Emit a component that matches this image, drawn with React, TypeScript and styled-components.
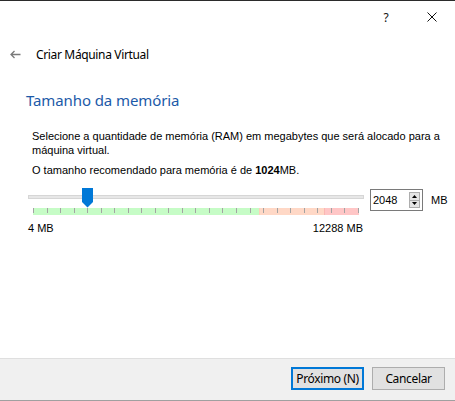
import React from "react";
import styled, { createGlobalStyle } from "styled-components";

const GlobalStyle = createGlobalStyle`
  html, body { margin: 0; padding: 0; background: #ffffff; }
  * { box-sizing: border-box; }
`;

const UI = `"Noto Sans", "Open Sans", sans-serif`;
const BODY = `"Liberation Sans", Arial, sans-serif`;

const Window = styled.div`
  width: 455px;
  height: 401px;
  border-top: 1px solid #2b2b2b;
  background: #ffffff;
  display: flex;
  flex-direction: column;
  overflow: hidden;
`;

const TitleBar = styled.div`
  height: 32px;
  display: flex;
  justify-content: flex-end;
  align-items: stretch;
`;

const CaptionButton = styled.div`
  width: 46px;
  display: flex;
  align-items: center;
  justify-content: center;
  font-family: ${UI};
  font-size: 12px;
  color: #111;
`;

const Content = styled.div`
  flex: 1;
  display: flex;
  flex-direction: column;
`;

const Header = styled.div`
  margin-top: 9px;
  height: 24px;
  display: flex;
  align-items: center;
  padding-left: 10px;
  gap: 15px;
`;

const HeaderTitle = styled.span`
  font-family: ${UI};
  font-size: 12px;
  color: #000;
  letter-spacing: -0.35px;
`;

const Heading = styled.h1`
  margin: 24px 0 0 26px;
  font-family: ${UI};
  font-weight: 400;
  font-size: 15px;
  line-height: 20px;
  color: #1c5aa8;
  letter-spacing: -0.1px;
`;

const Paragraph = styled.p<{ $gap: number }>`
  margin: ${(p) => p.$gap}px 0 0 32px;
  width: 420px;
  font-family: ${BODY};
  font-size: 11px;
  line-height: 14px;
  color: #000;
`;

const SliderRow = styled.div`
  margin: 11px 0 0 28px;
  display: flex;
  align-items: flex-start;
`;

const SliderArea = styled.div`
  position: relative;
  width: 336px;
  display: flex;
  flex-direction: column;
`;

const Track = styled.div`
  margin-top: 7px;
  height: 4px;
  background: #e7e7e7;
  border: 1px solid #d6d6d6;
`;

const Thumb = styled.svg`
  position: absolute;
  top: 0;
`;

const ScaleBar = styled.div`
  margin: 9px 5px 0 5px;
  height: 7px;
  background: linear-gradient(
    to right,
    #c6fcc6 0,
    #c6fcc6 226px,
    #fbc8b0 226px,
    #ffd8c6 227px,
    #ffd8c6 291px,
    #f5a8a0 291px,
    #ffc6c6 292px,
    #ffc6c6 100%
  );
  display: flex;
  justify-content: space-between;
`;

const Tick = styled.span`
  width: 1px;
  height: 5px;
  background: #a3a3a3;
`;

const Labels = styled.div`
  margin-top: 6px;
  display: flex;
  justify-content: space-between;
  padding-right: 1px;
  font-family: ${BODY};
  font-size: 11px;
  line-height: 14px;
  color: #000;
`;

const SpinBox = styled.div`
  margin: 1px 0 0 6px;
  width: 53px;
  height: 22px;
  border: 1px solid #7a7a7a;
  background: #fff;
  display: flex;
  align-items: center;
  justify-content: space-between;
  padding: 0 2px 0 2px;
`;

const SpinValue = styled.span`
  font-family: ${BODY};
  font-size: 11px;
  color: #000;
`;

const SpinButtons = styled.div`
  width: 11px;
  height: 16px;
  display: flex;
  flex-direction: column;
`;

const SpinButton = styled.div`
  flex: 1;
  background: #e5e5e5;
  border: 1px solid #adadad;
  display: flex;
  align-items: center;
  justify-content: center;
  & + & { border-top: none; }
`;

const Unit = styled.span`
  margin: 6px 0 0 8px;
  font-family: ${BODY};
  font-size: 11px;
  color: #000;
`;

const Footer = styled.div`
  height: 43px;
  border-top: 1px solid #dfdfdf;
  border-bottom: 1px solid #a0a0a0;
  background: #f0f0f0;
  display: flex;
  justify-content: flex-end;
  align-items: flex-start;
  padding: 8px 10px 0 0;
  gap: 8px;
`;

const Button = styled.button<{ $primary?: boolean }>`
  width: 73px;
  height: 23px;
  margin: 0;
  padding: 0;
  background: #e1e1e1;
  border: ${(p) => (p.$primary ? "2px solid #0078d7" : "1px solid #adadad")};
  font-family: ${UI};
  font-size: 12px;
  color: #000;
  letter-spacing: -0.35px;
`;

const MIN = 4;
const MAX = 12288;
const VALUE = 2048;
const SCALE_W = 326;

export default function App() {
  const center = 5 + ((VALUE - MIN) / (MAX - MIN)) * SCALE_W;
  return (
    <>
      <GlobalStyle />
      <Window>
        <TitleBar>
          <CaptionButton>?</CaptionButton>
          <CaptionButton>
            <svg width="10" height="10" viewBox="0 0 10 10">
              <path d="M0.5 0.5 L9.5 9.5 M9.5 0.5 L0.5 9.5" stroke="#111" strokeWidth="1" />
            </svg>
          </CaptionButton>
        </TitleBar>
        <Content>
          <Header>
            <svg width="11" height="9" viewBox="0 0 11 9">
              <path d="M10.5 4.5 H1 M4.5 1 L1 4.5 L4.5 8" stroke="#7a7a7a" strokeWidth="1.3" fill="none" />
            </svg>
            <HeaderTitle>Criar Máquina Virtual</HeaderTitle>
          </Header>
          <Heading>Tamanho da memória</Heading>
          <Paragraph $gap={19}>
            Selecione a quantidade de memória (RAM) em megabytes que será alocado para a máquina virtual.
          </Paragraph>
          <Paragraph $gap={6}>
            O tamanho recomendado para memória é de <b>1024</b>MB.
          </Paragraph>
          <SliderRow>
            <SliderArea>
              <Track />
              <Thumb
                width="11"
                height="20"
                viewBox="0 0 11 20"
                style={{ left: `${Math.round(center - 5)}px` }}
              >
                <path d="M0 0 H11 V14 L5.5 19.5 L0 14 Z" fill="#0078d7" />
              </Thumb>
              <ScaleBar>
                {Array.from({ length: 25 }, (_, i) => (
                  <Tick key={i} />
                ))}
              </ScaleBar>
              <Labels>
                <span>4 MB</span>
                <span>12288 MB</span>
              </Labels>
            </SliderArea>
            <SpinBox>
              <SpinValue>2048</SpinValue>
              <SpinButtons>
                <SpinButton>
                  <svg width="5" height="3" viewBox="0 0 5 3">
                    <path d="M0 3 L2.5 0 L5 3 Z" fill="#000" />
                  </svg>
                </SpinButton>
                <SpinButton>
                  <svg width="5" height="3" viewBox="0 0 5 3">
                    <path d="M0 0 L2.5 3 L5 0 Z" fill="#000" />
                  </svg>
                </SpinButton>
              </SpinButtons>
            </SpinBox>
            <Unit>MB</Unit>
          </SliderRow>
        </Content>
        <Footer>
          <Button $primary>Próximo (N)</Button>
          <Button>Cancelar</Button>
        </Footer>
      </Window>
    </>
  );
}
